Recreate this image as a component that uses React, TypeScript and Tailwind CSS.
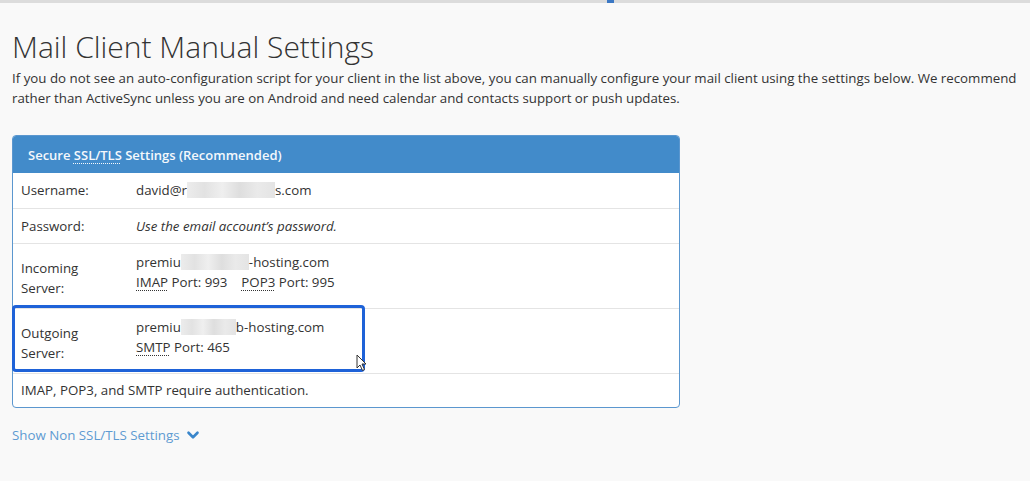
import { ChevronDown } from 'lucide-react'

function Blur({ w }: { w: number }) {
  // redacted part of an address, rendered as soft grey blocks
  return (
    <span
      className="inline-block h-[16px] align-[-3px] bg-[linear-gradient(90deg,#ececec_0%,#e2e2e2_20%,#efefef_40%,#dedede_60%,#eaeaea_80%,#e4e4e4_100%)]"
      style={{ width: w }}
    />
  )
}

function Abbr({ children }: { children: string }) {
  return <span className="underline decoration-dotted decoration-1 underline-offset-[3px]">{children}</span>
}

export default function App() {
  return (
    <div className="relative w-[1030px] h-[481px] overflow-hidden bg-[#f9f9f9] font-['Open_Sans',sans-serif] text-[#333]">
      {/* top edge of the page above */}
      <div className="h-[3px] bg-[#dcdcdc] flex">
        <div className="ml-[607px] w-[7px] bg-[#3b78c4]" />
      </div>

      <div className="pl-[12px] pt-[26px]">
        <h2 className="text-[30px] font-light leading-[36px] text-[#333]">Mail Client Manual Settings</h2>
        <p className="mt-[3px] text-[13.3px] leading-[20px] whitespace-nowrap">
          If you do not see an auto-configuration script for your client in the list above, you can manually configure your mail client using the settings below. We recommend
          <br />
          rather than ActiveSync unless you are on Android and need calendar and contacts support or push updates.
        </p>

        {/* settings panel */}
        <div className="mt-[27px] w-[668px] rounded-[4px] border border-[#5b97cf] bg-white overflow-hidden text-[13.3px] leading-[20px]">
          <div className="h-[37px] bg-[#428bca] px-[15px] flex items-center text-[13px] text-[#f4f8fc] font-semibold">
            Secure&nbsp;<Abbr>SSL/TLS</Abbr>&nbsp;Settings (Recommended)
          </div>
          <table className="w-full border-collapse">
            <tbody>
              <tr className="border-b border-[#e4e4e4]">
                <td className="w-[115px] px-[8px] h-[35px] align-middle">Username:</td>
                <td className="px-[8px] align-middle">
                  david@r<Blur w={88} />s.com
                </td>
              </tr>
              <tr className="border-b border-[#e4e4e4]">
                <td className="px-[8px] h-[35px] align-middle">Password:</td>
                <td className="px-[8px] align-middle italic">Use the email account’s password.</td>
              </tr>
              <tr className="border-b border-[#e4e4e4]">
                <td className="px-[8px] h-[65px] align-middle pt-[4px]">
                  Incoming
                  <br />
                  Server:
                </td>
                <td className="px-[8px] align-top pt-[8px]">
                  premiu<Blur w={68} />-hosting.com
                  <br />
                  <Abbr>IMAP</Abbr> Port: 993 &nbsp;&nbsp;&nbsp;<Abbr>POP3</Abbr> Port: 995
                </td>
              </tr>
              <tr className="border-b border-[#e4e4e4]">
                <td className="px-[8px] h-[65px] align-middle pt-[4px]">
                  Outgoing
                  <br />
                  Server:
                </td>
                <td className="px-[8px] align-top pt-[8px]">
                  premiu<Blur w={55} />b-hosting.com
                  <br />
                  <Abbr>SMTP</Abbr> Port: 465
                </td>
              </tr>
              <tr>
                <td colSpan={2} className="px-[8px] h-[34px] align-middle">
                  IMAP, POP3, and SMTP require authentication.
                </td>
              </tr>
            </tbody>
          </table>
        </div>

        <div className="mt-[17px] flex items-center gap-[4px] text-[13.3px] leading-[20px] text-[#5e9bd2]">
          Show Non SSL/TLS Settings
          <ChevronDown size={18} strokeWidth={3.5} className="text-[#3a86cb]" />
        </div>
      </div>

      {/* annotation box round the outgoing server row */}
      <div className="absolute left-[12px] top-[305px] w-[353px] h-[67px] rounded-[4px] border-[3px] border-[#1e62d8]" />

      {/* mouse pointer */}
      <svg className="absolute left-[356px] top-[354px]" width="12" height="18" viewBox="0 0 12 18">
        <path d="M1 1 L1 14 L4 11 L6.5 16.5 L8.5 15.5 L6 10 L10 10 Z" fill="#fff" stroke="#333" strokeWidth="1" />
      </svg>
    </div>
  )
}
